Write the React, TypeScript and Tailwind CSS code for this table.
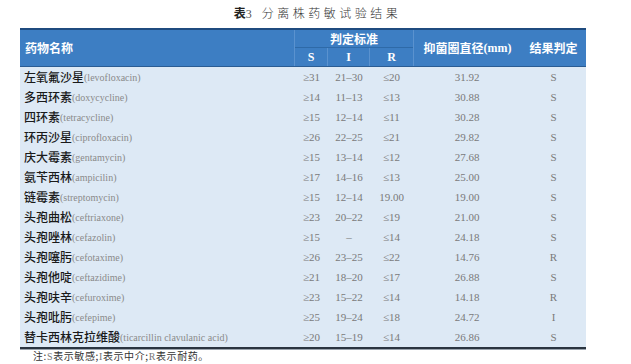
import React from "react";

const rows: [string, string, string, string, string, string, string][] = [
  ["左氧氟沙星", "levofloxacin", "≥31", "21–30", "≤20", "31.92", "S"],
  ["多西环素", "doxycycline", "≥14", "11–13", "≤13", "30.88", "S"],
  ["四环素", "tetracycline", "≥15", "12–14", "≤11", "30.28", "S"],
  ["环丙沙星", "ciprofloxacin", "≥26", "22–25", "≤21", "29.82", "S"],
  ["庆大霉素", "gentamycin", "≥15", "13–14", "≤12", "27.68", "S"],
  ["氨苄西林", "ampicilin", "≥17", "14–16", "≤13", "25.00", "S"],
  ["链霉素", "streptomycin", "≥15", "12–14", "19.00", "19.00", "S"],
  ["头孢曲松", "ceftriaxone", "≥23", "20–22", "≤19", "21.00", "S"],
  ["头孢唑林", "cefazolin", "≥15", "–", "≤14", "24.18", "S"],
  ["头孢噻肟", "cefotaxime", "≥26", "23–25", "≤22", "14.76", "R"],
  ["头孢他啶", "ceftazidime", "≥21", "18–20", "≤17", "26.88", "S"],
  ["头孢呋辛", "cefuroxime", "≥23", "15–22", "≤14", "14.18", "R"],
  ["头孢吡肟", "cefepime", "≥25", "19–24", "≤18", "24.72", "I"],
  ["替卡西林克拉维酸", "ticarcillin clavulanic acid", "≥20", "15–19", "≤14", "26.86", "S"],
];

const cjk = { fontFamily: '"Noto Sans CJK SC", "Noto Sans", sans-serif' };
const serif = { fontFamily: '"Liberation Serif", "DejaVu Serif", serif' };

export default function App() {
  return (
    <div className="w-[631px] h-[364px] bg-white overflow-hidden relative">
      <div className="h-[28px] flex items-start justify-center pt-[5px] pl-[4px]">
        <div className="flex items-baseline text-[12px] leading-[16px] text-[#222]" style={cjk}>
          <span className="font-bold">表</span>
          <span className="font-normal text-[#555]" style={serif}>3</span>
          <span className="ml-[10px] tracking-[3.5px] text-[#333] font-light">分离株药敏试验结果</span>
        </div>
      </div>
      <div className="ml-[20px] w-[566px]">
        <div
          className="grid grid-cols-[275px_33px_42px_43px_108px_65px] grid-rows-[18px_18px] bg-[#3d7ec3] border-t-2 border-b border-t-[#1f4b7f] border-b-[#2a5c93] text-white text-[12px] font-bold"
          style={cjk}
        >
          <div className="row-span-2 flex items-center pl-[5px] border-r border-[#5a92cf]">药物名称</div>
          <div className="col-span-3 flex items-center justify-center border-b border-[#2e6aa8]">判定标准</div>
          <div className="row-span-2 flex items-center justify-center border-l border-[#5a92cf]">
            抑菌圈直径<span style={serif} className="font-bold">(mm)</span>
          </div>
          <div className="row-span-2 flex items-center justify-center">结果判定</div>
          <div className="flex items-center justify-center border-r border-[#5a92cf]" style={serif}>S</div>
          <div className="flex items-center justify-center border-r border-[#5a92cf]" style={serif}>I</div>
          <div className="flex items-center justify-center" style={serif}>R</div>
        </div>
        <div className="bg-[#dde9f5] border-b-2 border-[#2a3440] shadow-[0_1px_0_#9aa3ad]">
          {rows.map((r, i) => (
            <div
              key={i}
              className="grid grid-cols-[275px_33px_42px_43px_108px_65px] h-[20px] items-center text-[11px] text-[#7a7a7a]"
              style={serif}
            >
              <div className="pl-[4px] flex items-center whitespace-nowrap">
                <span className="text-[12px] text-[#1a1a1a] font-medium" style={cjk}>{r[0]}</span>
                <span className="text-[10px] text-[#8a8a8a]">({r[1]})</span>
              </div>
              <div className="text-center">{r[2]}</div>
              <div className="text-center">{r[3]}</div>
              <div className="text-center">{r[4]}</div>
              <div className="text-center">{r[5]}</div>
              <div className="text-center">{r[6]}</div>
            </div>
          ))}
        </div>
      </div>
      <div className="pl-[33px] pt-[1px] text-[10px] leading-[12px] text-[#333] tracking-[0.6px]" style={cjk}>
        注:<span style={serif} className="text-[#777]">S</span>表示敏感;<span style={serif} className="text-[#777]">I</span>表示中介;<span style={serif} className="text-[#777]">R</span>表示耐药。
      </div>
    </div>
  );
}
